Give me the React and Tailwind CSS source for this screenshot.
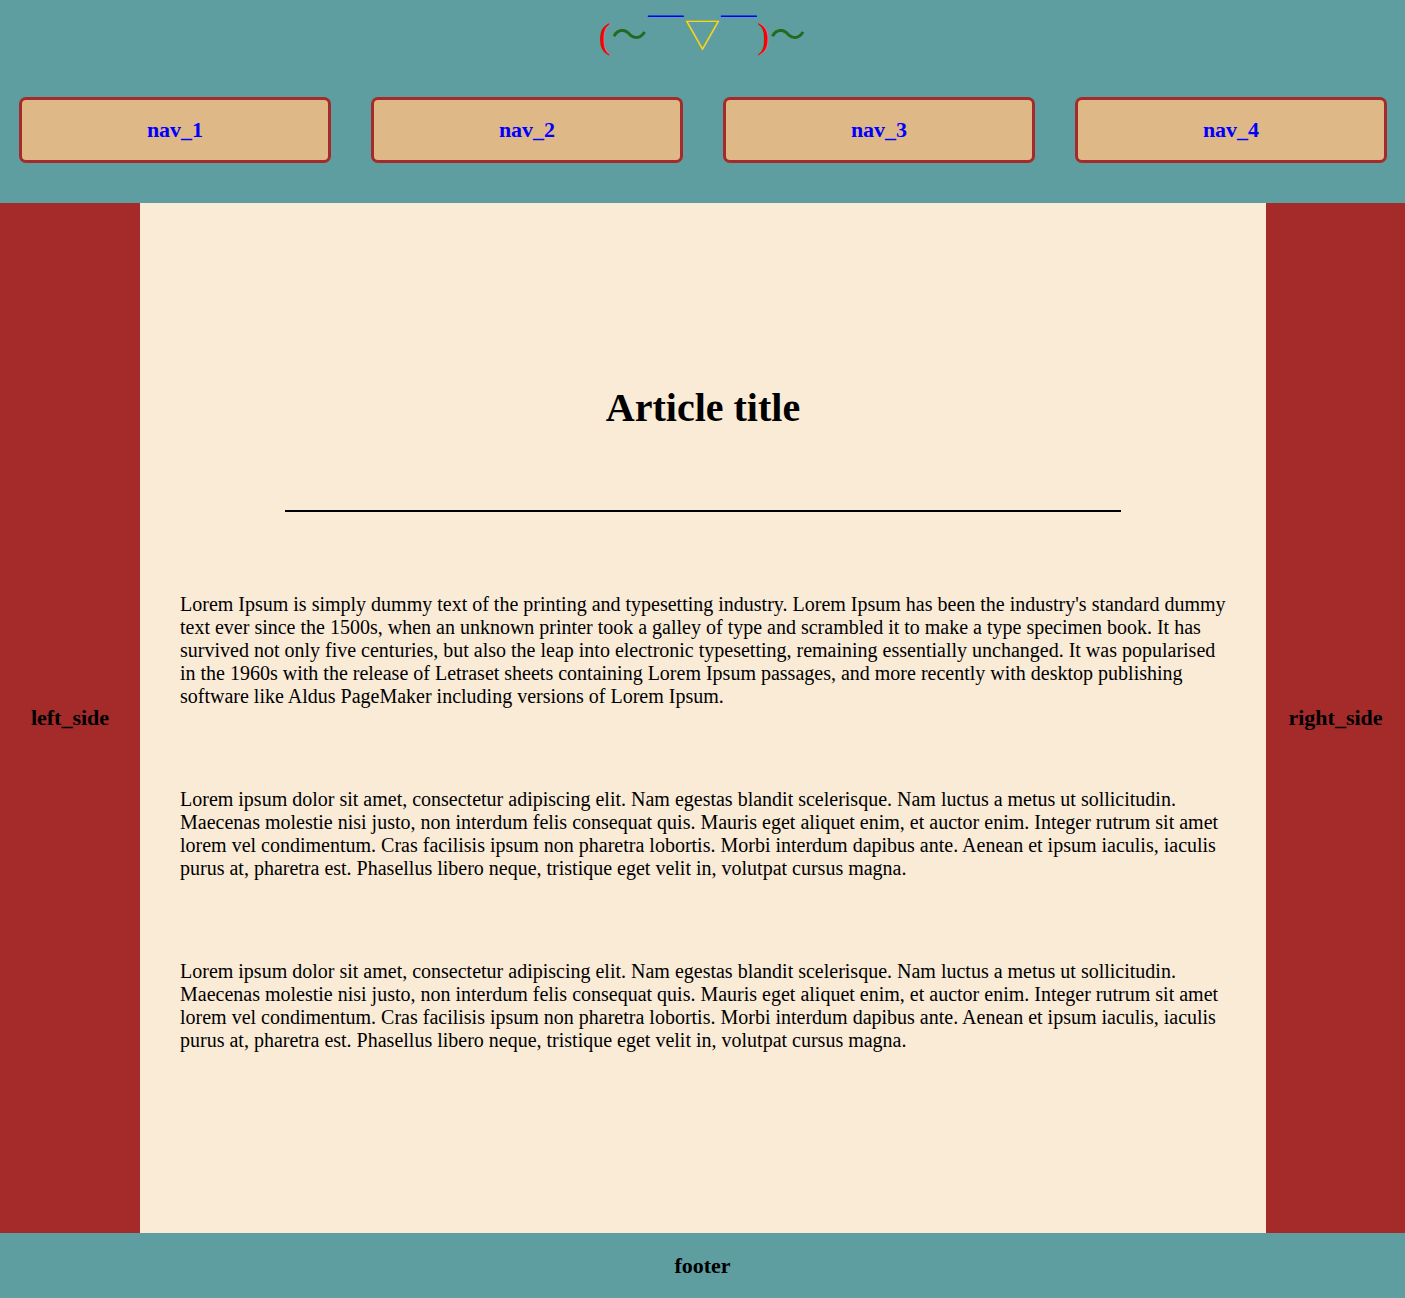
import React from "react";

const serif = { fontFamily: '"Liberation Serif", "Noto Sans CJK SC", serif' };

function Logo() {
  return (
    <div className="h-[72px] flex items-center justify-center">
      <span className="text-[36px] leading-none whitespace-nowrap tracking-[0.5px]" style={serif}>
        <span className="text-[#ff0000]">(</span>
        <span className="text-[#1f6b1f]">～</span>
        <span className="text-[#0000ff]">￣</span>
        <span className="text-[#ffd700]">▽</span>
        <span className="text-[#0000ff]">￣</span>
        <span className="text-[#ff0000]">)</span>
        <span className="text-[#1f6b1f]">～</span>
      </span>
    </div>
  );
}

function Nav() {
  const items = ["nav_1", "nav_2", "nav_3", "nav_4"];
  return (
    <div className="flex gap-[40px] pl-[19px] pt-[25px] pb-[40px]">
      {items.map((t) => (
        <div
          key={t}
          className="w-[312px] h-[66px] bg-[#deb887] border-[3px] border-[#a52a2a] rounded-[7px] flex items-center justify-center pb-[2px]"
        >
          <span className="text-[22px] font-bold text-[#0000ff]">{t}</span>
        </div>
      ))}
    </div>
  );
}

const p1 =
  "Lorem Ipsum is simply dummy text of the printing and typesetting industry. Lorem Ipsum has been the industry's standard dummy text ever since the 1500s, when an unknown printer took a galley of type and scrambled it to make a type specimen book. It has survived not only five centuries, but also the leap into electronic typesetting, remaining essentially unchanged. It was popularised in the 1960s with the release of Letraset sheets containing Lorem Ipsum passages, and more recently with desktop publishing software like Aldus PageMaker including versions of Lorem Ipsum.";
const p2 =
  "Lorem ipsum dolor sit amet, consectetur adipiscing elit. Nam egestas blandit scelerisque. Nam luctus a metus ut sollicitudin. Maecenas molestie nisi justo, non interdum felis consequat quis. Mauris eget aliquet enim, et auctor enim. Integer rutrum sit amet lorem vel condimentum. Cras facilisis ipsum non pharetra lobortis. Morbi interdum dapibus ante. Aenean et ipsum iaculis, iaculis purus at, pharetra est. Phasellus libero neque, tristique eget velit in, volutpat cursus magna.";

export default function App() {
  return (
    <div className="w-[1405px] text-black" style={serif}>
      <header className="bg-[#5f9ea0]">
        <Logo />
        <Nav />
      </header>
      <div className="flex h-[1030px]">
        <aside className="w-[140px] bg-[#a52a2a] flex items-center justify-center pb-[1px]">
          <span className="text-[22px] font-bold">left_side</span>
        </aside>
        <main className="flex-1 bg-[#faebd7] px-[40px] flex flex-col justify-center">
          <h1 className="text-[40px] font-bold text-center leading-[46px]">Article title</h1>
          <div className="mt-[79px] mx-auto w-[80%] h-[2px] bg-black"></div>
          <p className="mt-[81px] text-[20px] leading-[23px]">{p1}</p>
          <p className="mt-[80px] text-[20px] leading-[23px]">{p2}</p>
          <p className="mt-[80px] text-[20px] leading-[23px]">{p2}</p>
        </main>
        <aside className="w-[139px] bg-[#a52a2a] flex items-center justify-center pb-[1px]">
          <span className="text-[22px] font-bold">right_side</span>
        </aside>
      </div>
      <footer className="h-[65px] bg-[#5f9ea0] flex items-center justify-center">
        <span className="text-[22px] font-bold">footer</span>
      </footer>
    </div>
  );
}
